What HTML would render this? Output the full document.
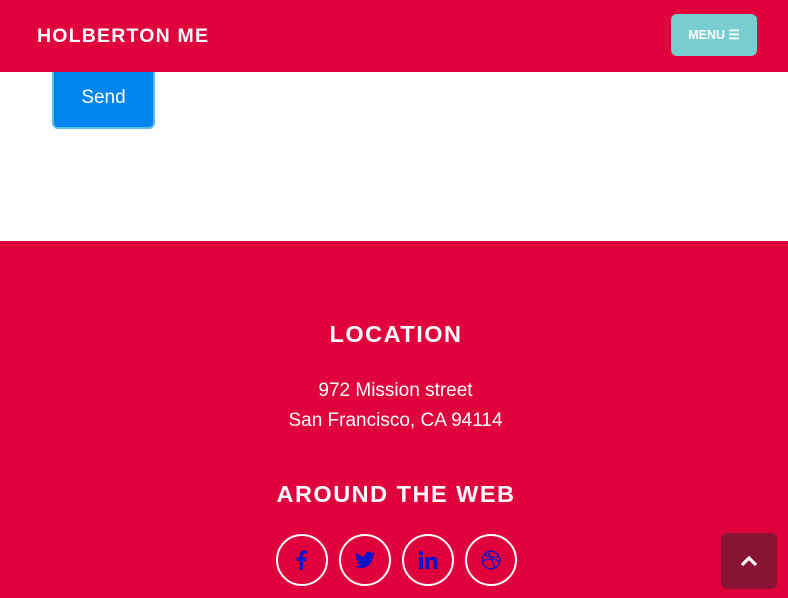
<!DOCTYPE html>
<html><head><style>
*{margin:0;padding:0;box-sizing:border-box}
body{width:788px;height:598px;overflow:hidden;background:#fff;font-family:"Liberation Sans",sans-serif;position:relative}
.nav{position:absolute;top:0;left:0;width:788px;height:72px;background:#e0003c;z-index:2}
.brand{position:absolute;left:37px;top:25px;color:#fff;font-weight:bold;font-size:19.5px;letter-spacing:1.2px}
.menu{position:absolute;left:671px;top:14px;width:86px;height:42px;background:#78cdd1;border-radius:6px;color:#fff;font-weight:bold;font-size:12.5px;line-height:42px;text-align:center}
.send{position:absolute;left:52px;top:55px;width:103px;height:74px;background:#0085f0;border:2px solid #5bc0ea;border-radius:6px;color:#fff;font-size:19px;padding-top:30px;text-align:center}
.foot{position:absolute;top:241px;left:0;width:788px;height:357px;background:#e0003c;color:#fff;text-align:center}
h3{position:absolute;width:100%;font-size:23.5px;font-weight:bold;letter-spacing:1.5px;padding-left:4px}
.addr{position:absolute;top:135px;width:100%;font-size:19px;line-height:30px;padding-left:3px}
.c{position:absolute;top:293px;width:52px;height:52px;border:2px solid #fff;border-radius:50%;display:flex;align-items:center;justify-content:center}
.top{position:absolute;left:721px;top:533px;width:56px;height:56px;background:#861432;border-radius:6px;display:flex;align-items:center;justify-content:center}
</style></head><body>
<div class="nav"><div class="brand">HOLBERTON ME</div><div class="menu">MENU &#9776;</div></div>
<div class="send">Send</div>
<div class="foot">
<h3 style="top:80px">LOCATION</h3>
<div class="addr">972 Mission street<br>San Francisco, CA 94114</div>
<h3 style="top:240px">AROUND THE WEB</h3>
<div class="c" style="left:276px"><svg width="20" height="20" viewBox="0 0 20 20"><path d="M11 20V11h3l.5-3.5H11V5.5c0-1 .3-1.7 1.8-1.7H15V.7C14.6.6 13.4.5 12.2.5 9.4.5 7.6 2.2 7.6 5.2v2.3H4.5V11h3.1v9z" fill="#0a14c8"/></svg></div>
<div class="c" style="left:339px"><svg width="20" height="18" viewBox="0 0 24 20"><path d="M24 2.4c-.9.4-1.8.6-2.8.8 1-.6 1.8-1.6 2.2-2.7-1 .6-2 1-3.1 1.2C19.4.7 18.1 0 16.6 0c-2.7 0-4.9 2.2-4.9 4.9 0 .4 0 .8.1 1.1C7.7 5.8 4.1 3.9 1.7.9c-.4.7-.7 1.6-.7 2.5 0 1.7.9 3.2 2.2 4.1-.8 0-1.6-.2-2.2-.6v.1c0 2.4 1.7 4.4 3.9 4.8-.4.1-.8.2-1.3.2-.3 0-.6 0-.9-.1.6 2 2.4 3.4 4.6 3.4-1.7 1.3-3.8 2.1-6.1 2.1-.4 0-.8 0-1.2-.1 2.2 1.4 4.8 2.2 7.5 2.2 9.1 0 14-7.5 14-14v-.6c1-.7 1.8-1.6 2.5-2.5z" fill="#0a14c8"/></svg></div>
<div class="c" style="left:402px"><svg width="20" height="18" viewBox="0 0 20 18"><rect x="1" y="6" width="4" height="12" fill="#0a14c8"/><circle cx="3" cy="2.3" r="2.2" fill="#0a14c8"/><path d="M7.5 6h3.8v1.8c.6-1.1 2-2.1 4-2.1 3.6 0 4.2 2.3 4.2 5.4V18h-4v-6c0-1.5-.1-3.1-2-3.1s-2.2 1.5-2.2 3V18h-3.8z" fill="#0a14c8"/></svg></div>
<div class="c" style="left:465px"><svg width="20" height="20" viewBox="0 0 20 20" fill="none" stroke="#0a14c8" stroke-width="1.3"><circle cx="10" cy="10" r="8.8"/><path d="M3.5 4.2c3 3 9 3.6 14.2 2.5M6.3 1.9c3.7 4.6 6 10 7 16.2M1.3 11.2c4.3-2.3 10.4-2.9 17.3.2"/></svg></div>
</div>
<div class="top"><svg width="18" height="12" viewBox="0 0 18 12"><path d="M2 10L9 3l7 7" stroke="#fff" stroke-width="3.2" fill="none"/></svg></div>
</body></html>
